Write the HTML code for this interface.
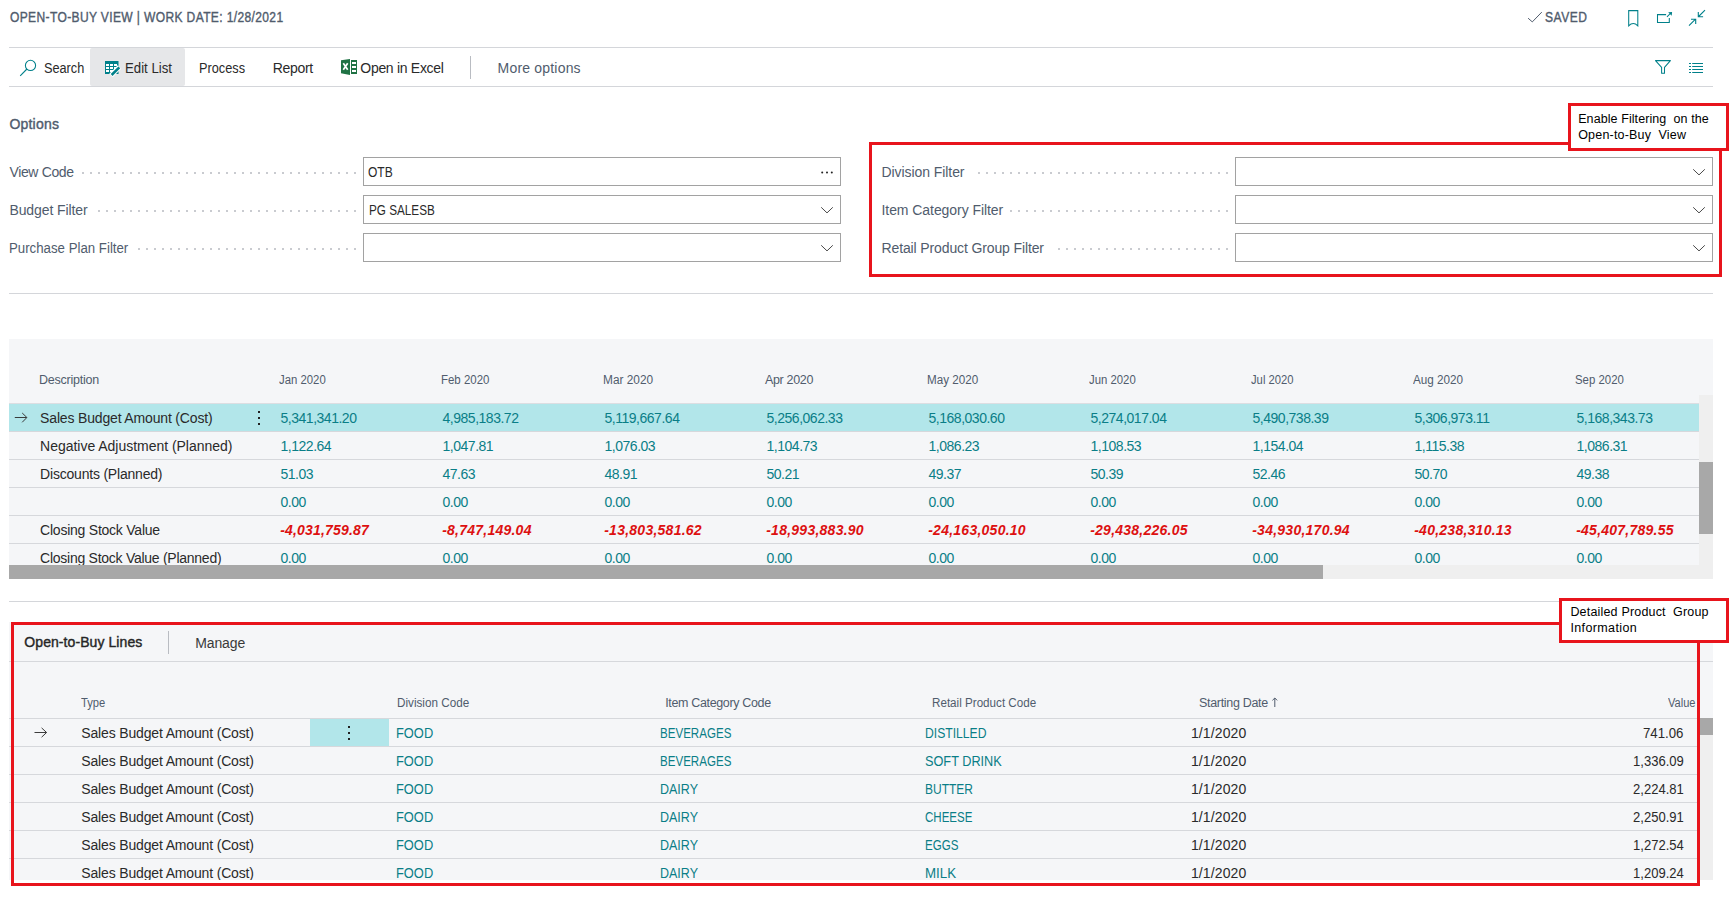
<!DOCTYPE html>
<html><head><meta charset="utf-8">
<style>
*{margin:0;padding:0;box-sizing:border-box}
html,body{width:1735px;height:902px;overflow:hidden;background:#fff}
body{position:relative;font-family:"Liberation Sans",sans-serif;color:#212121}
.t{position:absolute;white-space:pre;line-height:1}
.a{position:absolute}
.hl{position:absolute;height:1px;background:#d4d6da}
.lab{color:#505c6d}
.fld{position:absolute;border:1px solid #a2a2a2;background:#fff;height:29px}
.dots{position:absolute;height:2px;background-image:linear-gradient(to right,transparent 6px,#c9cbd0 6px);background-size:8px 2px;background-position:right top}
.hd{color:#505c6d}
.tl{color:#0a7e87}
.dk{color:#2a2a2a}
.rd{color:#dd1010;font-weight:bold;font-style:italic}
.red{position:absolute;border:3px solid #e8141c}
.call{position:absolute;background:#fff;border:3px solid #e8141c}
.ct{color:#000}
</style></head><body>
<div class="t " style="left:9.50px;top:10.05px;font-size:14px;color:#505c6d;-webkit-text-stroke:0.38px #505c6d;transform:scaleX(.86);transform-origin:left top;letter-spacing:0.42px;">OPEN-TO-BUY VIEW | WORK DATE: 1/28/2021</div>
<svg class="a" style="left:1527px;top:11px" width="16" height="13" viewBox="0 0 16 13"><path d="M1.1 7.2 L5.3 10.9 L14.8 1.1" fill="none" stroke="#505c6d" stroke-width="1.0"/></svg>
<div class="t " style="left:1545.00px;top:10.35px;font-size:14px;color:#505c6d;-webkit-text-stroke:0.38px #505c6d;transform:scaleX(.86);transform-origin:left top;letter-spacing:0.6px;">SAVED</div>
<svg class="a" style="left:1627px;top:9px" width="12" height="18" viewBox="0 0 12 18"><path d="M1.7 16.8 V1.6 H10.8 V16.8 Q6.25 12.3 1.7 16.8 Z" fill="none" stroke="#00808a" stroke-width="1.05"/></svg>
<svg class="a" style="left:1656px;top:11px" width="17" height="13" viewBox="0 0 17 13"><path d="M10.1 3.6 H1.5 V11.4 H13.3 V7" fill="none" stroke="#00808a" stroke-width="1.05"/><path d="M11 5.8 L14.8 2" stroke="#00808a" stroke-width="1.05"/><path d="M16.1 0.9 L12.2 1.3 L15.7 4.8 Z" fill="#00808a"/></svg>
<svg class="a" style="left:1688px;top:9px" width="18" height="18" viewBox="0 0 18 18"><path d="M17 1.1 L10.6 7.5 M10.3 3 V7.7 H15.1 M1 16.7 L7.5 10.2 M3 10.3 H7.7 V15" fill="none" stroke="#00808a" stroke-width="1.1"/></svg>
<div class="hl" style="left:9px;top:47px;width:1704px"></div>
<div class="hl" style="left:9px;top:86px;width:1704px"></div>
<div class="a" style="left:90px;top:48px;width:95px;height:38px;background:#e6e7e9;border-radius:2px"></div>
<svg class="a" style="left:19px;top:59px" width="19" height="19" viewBox="0 0 19 19"><circle cx="11.5" cy="6.4" r="5.1" fill="none" stroke="#00808a" stroke-width="1.05"/><path d="M7.9 10 L1.2 16.8" stroke="#00808a" stroke-width="1.1"/></svg>
<div class="t dk" style="left:44.40px;top:61.35px;font-size:14px;transform:scaleX(0.9081);transform-origin:0.00px 0;">Search</div>
<svg class="a" style="left:104px;top:60px" width="18" height="17" viewBox="0 0 18 17"><rect x="1" y="1" width="13.5" height="13" fill="#00808a"/><rect x="2" y="4" width="3" height="2" fill="#fff"/><rect x="6" y="4" width="3" height="2" fill="#fff"/><rect x="10" y="4" width="3" height="2" fill="#fff"/><rect x="2" y="7" width="3" height="2" fill="#fff"/><rect x="6" y="7" width="3" height="2" fill="#fff"/><rect x="10" y="7" width="3" height="2" fill="#fff"/><rect x="2" y="10" width="3" height="2" fill="#fff"/><rect x="6" y="10" width="3" height="2" fill="#fff"/><rect x="10" y="10" width="3" height="2" fill="#fff"/><path d="M7 15.5 L15.5 7" stroke="#fff" stroke-width="5"/><path d="M7.6 15 L15.3 7.3" stroke="#00808a" stroke-width="2.6"/></svg>
<div class="t dk" style="left:124.50px;top:61.35px;font-size:14px;transform:scaleX(0.9423);transform-origin:0.00px 0;">Edit List</div>
<div class="t dk" style="left:198.90px;top:61.35px;font-size:14px;transform:scaleX(0.9102);transform-origin:0.00px 0;">Process</div>
<div class="t dk" style="left:272.70px;top:61.35px;font-size:14px;letter-spacing:-0.320px;">Report</div>
<svg class="a" style="left:340px;top:59px" width="18" height="17" viewBox="0 0 18 17"><path d="M1 1.3 L10 0 V16 L1 14.3 Z" fill="#1f7244"/><rect x="11" y="1" width="6" height="14" fill="#1f7244"/><rect x="12" y="3" width="4" height="2" fill="#fff"/><rect x="12" y="7" width="4" height="2" fill="#fff"/><rect x="12" y="11" width="4" height="2" fill="#fff"/><path d="M3.3 4.2 L7.7 10.8 M7.7 4.2 L3.3 10.8" stroke="#fff" stroke-width="1.7"/></svg>
<div class="t dk" style="left:360.30px;top:61.35px;font-size:14px;letter-spacing:-0.296px;">Open in Excel</div>
<div class="a" style="left:470px;top:56px;width:1px;height:23px;background:#b9bcc2"></div>
<div class="t " style="left:497.60px;top:61.35px;font-size:14px;color:#505c6d;letter-spacing:0.189px;">More options</div>
<svg class="a" style="left:1654px;top:59px" width="18" height="16" viewBox="0 0 18 16"><path d="M1.5 1.6 H16.4 L10.5 8.3 V14.3 H7.6 V8.3 Z" fill="none" stroke="#00808a" stroke-width="1.05" stroke-linejoin="round"/></svg>
<svg class="a" style="left:1688px;top:61px" width="16" height="13" viewBox="0 0 16 13"><path d="M1 2.5 H3 M1 5.5 H3 M1 8.5 H3 M1 11.5 H3 M4.2 2.5 H15 M4.2 5.5 H15 M4.2 8.5 H15 M4.2 11.5 H15" stroke="#00808a" stroke-width="1.05"/></svg>
<div class="t " style="left:9.40px;top:117.45px;font-size:14px;color:#505c6d;-webkit-text-stroke:0.4px #505c6d;letter-spacing:0.212px;">Options</div>
<div class="t lab" style="left:9.40px;top:165.45px;font-size:14px;letter-spacing:-0.348px;">View Code</div>
<div class="dots" style="left:75.5px;width:280px;top:172px"></div>
<div class="fld" style="left:363px;top:157px;width:478px"></div>
<div class="t lab" style="left:881.50px;top:165.45px;font-size:14px;letter-spacing:-0.071px;">Division Filter</div>
<div class="dots" style="left:971.5px;width:256px;top:172px"></div>
<div class="fld" style="left:1235px;top:157px;width:478px"></div>
<svg class="a" style="left:1692px;top:167px" width="14" height="9" viewBox="0 0 14 9"><path d="M1.2 2.3 L7 7.9 L12.8 2.3" fill="none" stroke="#4a4a4a" stroke-width="1.0"/></svg>
<div class="t lab" style="left:9.40px;top:203.45px;font-size:14px;letter-spacing:-0.090px;">Budget Filter</div>
<div class="dots" style="left:91.5px;width:264px;top:210px"></div>
<div class="fld" style="left:363px;top:195px;width:478px"></div>
<svg class="a" style="left:820px;top:205px" width="14" height="9" viewBox="0 0 14 9"><path d="M1.2 2.3 L7 7.9 L12.8 2.3" fill="none" stroke="#4a4a4a" stroke-width="1.0"/></svg>
<div class="t lab" style="left:881.50px;top:203.45px;font-size:14px;letter-spacing:-0.064px;">Item Category Filter</div>
<div class="dots" style="left:1003.5px;width:224px;top:210px"></div>
<div class="fld" style="left:1235px;top:195px;width:478px"></div>
<svg class="a" style="left:1692px;top:205px" width="14" height="9" viewBox="0 0 14 9"><path d="M1.2 2.3 L7 7.9 L12.8 2.3" fill="none" stroke="#4a4a4a" stroke-width="1.0"/></svg>
<div class="t lab" style="left:9.40px;top:241.45px;font-size:14px;transform:scaleX(0.9463);transform-origin:0.00px 0;">Purchase Plan Filter</div>
<div class="dots" style="left:131.5px;width:224px;top:248px"></div>
<div class="fld" style="left:363px;top:233px;width:478px"></div>
<svg class="a" style="left:820px;top:243px" width="14" height="9" viewBox="0 0 14 9"><path d="M1.2 2.3 L7 7.9 L12.8 2.3" fill="none" stroke="#4a4a4a" stroke-width="1.0"/></svg>
<div class="t lab" style="left:881.50px;top:241.45px;font-size:14px;letter-spacing:-0.125px;">Retail Product Group Filter</div>
<div class="dots" style="left:1051.5px;width:176px;top:248px"></div>
<div class="fld" style="left:1235px;top:233px;width:478px"></div>
<svg class="a" style="left:1692px;top:243px" width="14" height="9" viewBox="0 0 14 9"><path d="M1.2 2.3 L7 7.9 L12.8 2.3" fill="none" stroke="#4a4a4a" stroke-width="1.0"/></svg>
<div class="t dk" style="left:368.10px;top:165.45px;font-size:14px;transform:scaleX(0.8585);transform-origin:0.00px 0;">OTB</div>
<div class="t dk" style="left:368.50px;top:203.45px;font-size:14px;transform:scaleX(0.8370);transform-origin:0.00px 0;">PG SALESB</div>
<svg class="a" style="left:818px;top:168px" width="18" height="9" viewBox="0 0 18 9"><circle cx="4.2" cy="4.5" r="1" fill="#222"/><circle cx="9" cy="4.5" r="1" fill="#222"/><circle cx="13.8" cy="4.5" r="1" fill="#222"/></svg>
<div class="hl" style="left:9px;top:293px;width:1704px"></div>
<div class="a" style="left:9px;top:339px;width:1704px;height:240px;background:#f5f6f8"></div>
<div class="t hd" style="left:39.10px;top:373.72px;font-size:12.5px;letter-spacing:-0.250px;">Description</div>
<div class="t hd" style="left:279.00px;top:373.72px;font-size:12.5px;transform:scaleX(0.9079);transform-origin:0.00px 0;">Jan 2020</div>
<div class="t hd" style="left:441.00px;top:373.72px;font-size:12.5px;transform:scaleX(0.9164);transform-origin:0.00px 0;">Feb 2020</div>
<div class="t hd" style="left:603.00px;top:373.72px;font-size:12.5px;transform:scaleX(0.9486);transform-origin:0.00px 0;">Mar 2020</div>
<div class="t hd" style="left:765.00px;top:373.72px;font-size:12.5px;letter-spacing:-0.336px;">Apr 2020</div>
<div class="t hd" style="left:927.00px;top:373.72px;font-size:12.5px;transform:scaleX(0.9330);transform-origin:0.00px 0;">May 2020</div>
<div class="t hd" style="left:1089.00px;top:373.72px;font-size:12.5px;transform:scaleX(0.9079);transform-origin:0.00px 0;">Jun 2020</div>
<div class="t hd" style="left:1251.00px;top:373.72px;font-size:12.5px;transform:scaleX(0.8995);transform-origin:0.00px 0;">Jul 2020</div>
<div class="t hd" style="left:1413.00px;top:373.72px;font-size:12.5px;transform:scaleX(0.9364);transform-origin:0.00px 0;">Aug 2020</div>
<div class="t hd" style="left:1575.00px;top:373.72px;font-size:12.5px;transform:scaleX(0.9121);transform-origin:0.00px 0;">Sep 2020</div>
<div class="a" style="left:0;top:0;width:1735px;height:565px;overflow:hidden">
<div class="a" style="left:9px;top:404px;width:1690px;height:27px;background:#b2e6ea"></div>
<div class="t dk" style="left:40.10px;top:411.35px;font-size:14px;letter-spacing:-0.163px;">Sales Budget Amount (Cost)</div>
<div class="t tl" style="left:280.50px;top:411.35px;font-size:14px;letter-spacing:-0.48px;">5,341,341.20</div>
<div class="t tl" style="left:442.50px;top:411.35px;font-size:14px;letter-spacing:-0.48px;">4,985,183.72</div>
<div class="t tl" style="left:604.50px;top:411.35px;font-size:14px;letter-spacing:-0.48px;">5,119,667.64</div>
<div class="t tl" style="left:766.50px;top:411.35px;font-size:14px;letter-spacing:-0.48px;">5,256,062.33</div>
<div class="t tl" style="left:928.50px;top:411.35px;font-size:14px;letter-spacing:-0.48px;">5,168,030.60</div>
<div class="t tl" style="left:1090.50px;top:411.35px;font-size:14px;letter-spacing:-0.48px;">5,274,017.04</div>
<div class="t tl" style="left:1252.50px;top:411.35px;font-size:14px;letter-spacing:-0.48px;">5,490,738.39</div>
<div class="t tl" style="left:1414.50px;top:411.35px;font-size:14px;letter-spacing:-0.48px;">5,306,973.11</div>
<div class="t tl" style="left:1576.50px;top:411.35px;font-size:14px;letter-spacing:-0.48px;">5,168,343.73</div>
<div class="hl" style="left:9px;top:431px;width:1690px;background:#d6d8dc"></div>
<div class="t dk" style="left:40.10px;top:439.35px;font-size:14px;letter-spacing:-0.025px;">Negative Adjustment (Planned)</div>
<div class="t tl" style="left:280.50px;top:439.35px;font-size:14px;letter-spacing:-0.48px;">1,122.64</div>
<div class="t tl" style="left:442.50px;top:439.35px;font-size:14px;letter-spacing:-0.48px;">1,047.81</div>
<div class="t tl" style="left:604.50px;top:439.35px;font-size:14px;letter-spacing:-0.48px;">1,076.03</div>
<div class="t tl" style="left:766.50px;top:439.35px;font-size:14px;letter-spacing:-0.48px;">1,104.73</div>
<div class="t tl" style="left:928.50px;top:439.35px;font-size:14px;letter-spacing:-0.48px;">1,086.23</div>
<div class="t tl" style="left:1090.50px;top:439.35px;font-size:14px;letter-spacing:-0.48px;">1,108.53</div>
<div class="t tl" style="left:1252.50px;top:439.35px;font-size:14px;letter-spacing:-0.48px;">1,154.04</div>
<div class="t tl" style="left:1414.50px;top:439.35px;font-size:14px;letter-spacing:-0.48px;">1,115.38</div>
<div class="t tl" style="left:1576.50px;top:439.35px;font-size:14px;letter-spacing:-0.48px;">1,086.31</div>
<div class="hl" style="left:9px;top:459px;width:1690px;background:#d6d8dc"></div>
<div class="t dk" style="left:40.10px;top:467.35px;font-size:14px;letter-spacing:-0.204px;">Discounts (Planned)</div>
<div class="t tl" style="left:280.50px;top:467.35px;font-size:14px;letter-spacing:-0.48px;">51.03</div>
<div class="t tl" style="left:442.50px;top:467.35px;font-size:14px;letter-spacing:-0.48px;">47.63</div>
<div class="t tl" style="left:604.50px;top:467.35px;font-size:14px;letter-spacing:-0.48px;">48.91</div>
<div class="t tl" style="left:766.50px;top:467.35px;font-size:14px;letter-spacing:-0.48px;">50.21</div>
<div class="t tl" style="left:928.50px;top:467.35px;font-size:14px;letter-spacing:-0.48px;">49.37</div>
<div class="t tl" style="left:1090.50px;top:467.35px;font-size:14px;letter-spacing:-0.48px;">50.39</div>
<div class="t tl" style="left:1252.50px;top:467.35px;font-size:14px;letter-spacing:-0.48px;">52.46</div>
<div class="t tl" style="left:1414.50px;top:467.35px;font-size:14px;letter-spacing:-0.48px;">50.70</div>
<div class="t tl" style="left:1576.50px;top:467.35px;font-size:14px;letter-spacing:-0.48px;">49.38</div>
<div class="hl" style="left:9px;top:487px;width:1690px;background:#d6d8dc"></div>
<div class="t tl" style="left:280.50px;top:495.35px;font-size:14px;letter-spacing:-0.48px;">0.00</div>
<div class="t tl" style="left:442.50px;top:495.35px;font-size:14px;letter-spacing:-0.48px;">0.00</div>
<div class="t tl" style="left:604.50px;top:495.35px;font-size:14px;letter-spacing:-0.48px;">0.00</div>
<div class="t tl" style="left:766.50px;top:495.35px;font-size:14px;letter-spacing:-0.48px;">0.00</div>
<div class="t tl" style="left:928.50px;top:495.35px;font-size:14px;letter-spacing:-0.48px;">0.00</div>
<div class="t tl" style="left:1090.50px;top:495.35px;font-size:14px;letter-spacing:-0.48px;">0.00</div>
<div class="t tl" style="left:1252.50px;top:495.35px;font-size:14px;letter-spacing:-0.48px;">0.00</div>
<div class="t tl" style="left:1414.50px;top:495.35px;font-size:14px;letter-spacing:-0.48px;">0.00</div>
<div class="t tl" style="left:1576.50px;top:495.35px;font-size:14px;letter-spacing:-0.48px;">0.00</div>
<div class="hl" style="left:9px;top:515px;width:1690px;background:#d6d8dc"></div>
<div class="t dk" style="left:40.10px;top:523.35px;font-size:14px;letter-spacing:-0.236px;">Closing Stock Value</div>
<div class="t rd" style="left:280.20px;top:523.35px;font-size:14px;letter-spacing:0.182px;">-4,031,759.87</div>
<div class="t rd" style="left:442.20px;top:523.35px;font-size:14px;letter-spacing:0.235px;">-8,747,149.04</div>
<div class="t rd" style="left:604.20px;top:523.35px;font-size:14px;letter-spacing:0.252px;">-13,803,581.62</div>
<div class="t rd" style="left:766.20px;top:523.35px;font-size:14px;letter-spacing:0.252px;">-18,993,883.90</div>
<div class="t rd" style="left:928.20px;top:523.35px;font-size:14px;letter-spacing:0.252px;">-24,163,050.10</div>
<div class="t rd" style="left:1090.20px;top:523.35px;font-size:14px;letter-spacing:0.242px;">-29,438,226.05</div>
<div class="t rd" style="left:1252.20px;top:523.35px;font-size:14px;letter-spacing:0.252px;">-34,930,170.94</div>
<div class="t rd" style="left:1414.20px;top:523.35px;font-size:14px;letter-spacing:0.252px;">-40,238,310.13</div>
<div class="t rd" style="left:1576.20px;top:523.35px;font-size:14px;letter-spacing:0.242px;">-45,407,789.55</div>
<div class="hl" style="left:9px;top:543px;width:1690px;background:#d6d8dc"></div>
<div class="t dk" style="left:40.10px;top:551.35px;font-size:14px;letter-spacing:-0.263px;">Closing Stock Value (Planned)</div>
<div class="t tl" style="left:280.50px;top:551.35px;font-size:14px;letter-spacing:-0.48px;">0.00</div>
<div class="t tl" style="left:442.50px;top:551.35px;font-size:14px;letter-spacing:-0.48px;">0.00</div>
<div class="t tl" style="left:604.50px;top:551.35px;font-size:14px;letter-spacing:-0.48px;">0.00</div>
<div class="t tl" style="left:766.50px;top:551.35px;font-size:14px;letter-spacing:-0.48px;">0.00</div>
<div class="t tl" style="left:928.50px;top:551.35px;font-size:14px;letter-spacing:-0.48px;">0.00</div>
<div class="t tl" style="left:1090.50px;top:551.35px;font-size:14px;letter-spacing:-0.48px;">0.00</div>
<div class="t tl" style="left:1252.50px;top:551.35px;font-size:14px;letter-spacing:-0.48px;">0.00</div>
<div class="t tl" style="left:1414.50px;top:551.35px;font-size:14px;letter-spacing:-0.48px;">0.00</div>
<div class="t tl" style="left:1576.50px;top:551.35px;font-size:14px;letter-spacing:-0.48px;">0.00</div>
</div>
<div class="hl" style="left:9px;top:403px;width:1690px;background:#dcdee2"></div>
<svg class="a" style="left:14px;top:412px" width="14" height="12" viewBox="0 0 14 12"><path d="M0.8 5.5 H12.6 M8.2 1 L12.9 5.5 L8.2 10.3" fill="none" stroke="#333" stroke-width="0.95"/></svg>
<div class="a" style="left:258px;top:411px;width:2px;height:2px;background:#222"></div><div class="a" style="left:258px;top:417px;width:2px;height:2px;background:#222"></div><div class="a" style="left:258px;top:423px;width:2px;height:2px;background:#222"></div>
<div class="a" style="left:1699px;top:395px;width:14px;height:170px;background:#efefef"></div>
<div class="a" style="left:1699px;top:462px;width:14px;height:72px;background:#a8a8a8"></div>
<div class="a" style="left:9px;top:565px;width:1704px;height:14px;background:#efefef"></div>
<div class="a" style="left:9px;top:565px;width:1314px;height:14px;background:#a8a8a8"></div>
<div class="hl" style="left:9px;top:601px;width:1704px"></div>
<div class="a" style="left:9px;top:622px;width:1704px;height:258px;background:#f5f6f8"></div>
<div class="t " style="left:24.30px;top:635.15px;font-size:14px;color:#262626;-webkit-text-stroke:0.4px #262626;letter-spacing:0.077px;">Open-to-Buy Lines</div>
<div class="a" style="left:168px;top:631px;width:1px;height:23px;background:#b9bcc2"></div>
<div class="t " style="left:195.20px;top:636.15px;font-size:14px;color:#3a3a3a;letter-spacing:-0.122px;">Manage</div>
<div class="hl" style="left:9px;top:661px;width:1704px;background:#d6d8dc"></div>
<div class="t hd" style="left:81.30px;top:696.62px;font-size:12.5px;transform:scaleX(0.8959);transform-origin:0.00px 0;">Type</div>
<div class="t hd" style="left:397.30px;top:696.62px;font-size:12.5px;transform:scaleX(0.9361);transform-origin:0.00px 0;">Division Code</div>
<div class="t hd" style="left:665.20px;top:696.62px;font-size:12.5px;letter-spacing:-0.346px;">Item Category Code</div>
<div class="t hd" style="left:932.30px;top:696.62px;font-size:12.5px;transform:scaleX(0.9314);transform-origin:0.00px 0;">Retail Product Code</div>
<div class="t hd" style="left:1199.00px;top:696.62px;font-size:12.5px;letter-spacing:-0.311px;">Starting Date</div>
<svg class="a" style="left:1272px;top:697px" width="7" height="11" viewBox="0 0 7 11"><path d="M2.8 10 V1 M0.4 3.4 L2.8 1 L5.2 3.4" fill="none" stroke="#505c6d" stroke-width="1"/></svg>
<div class="t hd" style="left:1667.90px;top:696.62px;font-size:12.5px;transform:scaleX(0.8853);transform-origin:0.00px 0;">Value</div>
<div class="a" style="left:0;top:0;width:1735px;height:880px;overflow:hidden">
<div class="a" style="left:310px;top:719px;width:79px;height:27px;background:#b2e6ea"></div>
<div class="hl" style="left:9px;top:718px;width:1690px;background:#d6d8dc"></div>
<div class="t dk" style="left:81.30px;top:725.95px;font-size:14px;letter-spacing:-0.159px;">Sales Budget Amount (Cost)</div>
<div class="t tl" style="left:395.50px;top:725.95px;font-size:14px;transform:scaleX(0.9194);transform-origin:0.00px 0;">FOOD</div>
<div class="t tl" style="left:660.40px;top:725.95px;font-size:14px;transform:scaleX(0.8266);transform-origin:0.00px 0;">BEVERAGES</div>
<div class="t tl" style="left:925.20px;top:725.95px;font-size:14px;transform:scaleX(0.8690);transform-origin:0.00px 0;">DISTILLED</div>
<div class="t dk" style="left:1190.90px;top:725.95px;font-size:14px;letter-spacing:0.124px;">1/1/2020</div>
<div class="t dk" style="left:1643.30px;top:725.95px;font-size:14px;transform:scaleX(0.9454);transform-origin:0.00px 0;">741.06</div>
<div class="hl" style="left:9px;top:746px;width:1690px;background:#d6d8dc"></div>
<div class="t dk" style="left:81.30px;top:753.95px;font-size:14px;letter-spacing:-0.159px;">Sales Budget Amount (Cost)</div>
<div class="t tl" style="left:395.50px;top:753.95px;font-size:14px;transform:scaleX(0.9194);transform-origin:0.00px 0;">FOOD</div>
<div class="t tl" style="left:660.40px;top:753.95px;font-size:14px;transform:scaleX(0.8266);transform-origin:0.00px 0;">BEVERAGES</div>
<div class="t tl" style="left:925.20px;top:753.95px;font-size:14px;transform:scaleX(0.9082);transform-origin:0.00px 0;">SOFT DRINK</div>
<div class="t dk" style="left:1190.90px;top:753.95px;font-size:14px;letter-spacing:0.124px;">1/1/2020</div>
<div class="t dk" style="left:1633.00px;top:753.95px;font-size:14px;transform:scaleX(0.9316);transform-origin:0.00px 0;">1,336.09</div>
<div class="hl" style="left:9px;top:774px;width:1690px;background:#d6d8dc"></div>
<div class="t dk" style="left:81.30px;top:781.95px;font-size:14px;letter-spacing:-0.159px;">Sales Budget Amount (Cost)</div>
<div class="t tl" style="left:395.50px;top:781.95px;font-size:14px;transform:scaleX(0.9194);transform-origin:0.00px 0;">FOOD</div>
<div class="t tl" style="left:660.40px;top:781.95px;font-size:14px;transform:scaleX(0.8929);transform-origin:0.00px 0;">DAIRY</div>
<div class="t tl" style="left:925.20px;top:781.95px;font-size:14px;transform:scaleX(0.8571);transform-origin:0.00px 0;">BUTTER</div>
<div class="t dk" style="left:1190.90px;top:781.95px;font-size:14px;letter-spacing:0.124px;">1/1/2020</div>
<div class="t dk" style="left:1633.00px;top:781.95px;font-size:14px;transform:scaleX(0.9316);transform-origin:0.00px 0;">2,224.81</div>
<div class="hl" style="left:9px;top:802px;width:1690px;background:#d6d8dc"></div>
<div class="t dk" style="left:81.30px;top:809.95px;font-size:14px;letter-spacing:-0.159px;">Sales Budget Amount (Cost)</div>
<div class="t tl" style="left:395.50px;top:809.95px;font-size:14px;transform:scaleX(0.9194);transform-origin:0.00px 0;">FOOD</div>
<div class="t tl" style="left:660.40px;top:809.95px;font-size:14px;transform:scaleX(0.8929);transform-origin:0.00px 0;">DAIRY</div>
<div class="t tl" style="left:925.20px;top:809.95px;font-size:14px;transform:scaleX(0.8228);transform-origin:0.00px 0;">CHEESE</div>
<div class="t dk" style="left:1190.90px;top:809.95px;font-size:14px;letter-spacing:0.124px;">1/1/2020</div>
<div class="t dk" style="left:1633.00px;top:809.95px;font-size:14px;transform:scaleX(0.9316);transform-origin:0.00px 0;">2,250.91</div>
<div class="hl" style="left:9px;top:830px;width:1690px;background:#d6d8dc"></div>
<div class="t dk" style="left:81.30px;top:837.95px;font-size:14px;letter-spacing:-0.159px;">Sales Budget Amount (Cost)</div>
<div class="t tl" style="left:395.50px;top:837.95px;font-size:14px;transform:scaleX(0.9194);transform-origin:0.00px 0;">FOOD</div>
<div class="t tl" style="left:660.40px;top:837.95px;font-size:14px;transform:scaleX(0.8929);transform-origin:0.00px 0;">DAIRY</div>
<div class="t tl" style="left:925.20px;top:837.95px;font-size:14px;transform:scaleX(0.8280);transform-origin:0.00px 0;">EGGS</div>
<div class="t dk" style="left:1190.90px;top:837.95px;font-size:14px;letter-spacing:0.124px;">1/1/2020</div>
<div class="t dk" style="left:1633.00px;top:837.95px;font-size:14px;transform:scaleX(0.9316);transform-origin:0.00px 0;">1,272.54</div>
<div class="hl" style="left:9px;top:858px;width:1690px;background:#d6d8dc"></div>
<div class="t dk" style="left:81.30px;top:865.95px;font-size:14px;letter-spacing:-0.159px;">Sales Budget Amount (Cost)</div>
<div class="t tl" style="left:395.50px;top:865.95px;font-size:14px;transform:scaleX(0.9194);transform-origin:0.00px 0;">FOOD</div>
<div class="t tl" style="left:660.40px;top:865.95px;font-size:14px;transform:scaleX(0.8929);transform-origin:0.00px 0;">DAIRY</div>
<div class="t tl" style="left:925.20px;top:865.95px;font-size:14px;transform:scaleX(0.9514);transform-origin:0.00px 0;">MILK</div>
<div class="t dk" style="left:1190.90px;top:865.95px;font-size:14px;letter-spacing:0.124px;">1/1/2020</div>
<div class="t dk" style="left:1633.00px;top:865.95px;font-size:14px;transform:scaleX(0.9316);transform-origin:0.00px 0;">1,209.24</div>
</div>
<svg class="a" style="left:34px;top:727px" width="14" height="12" viewBox="0 0 14 12"><path d="M0.5 5.5 H12.4 M7.6 0.9 L12.6 5.5 L7.6 10.2" fill="none" stroke="#333" stroke-width="0.95"/></svg>
<div class="a" style="left:348px;top:726px;width:2px;height:2px;background:#222"></div><div class="a" style="left:348px;top:732px;width:2px;height:2px;background:#222"></div><div class="a" style="left:348px;top:738px;width:2px;height:2px;background:#222"></div>
<div class="a" style="left:1700px;top:718px;width:13px;height:162px;background:#efefef"></div>
<div class="a" style="left:1700px;top:718px;width:13px;height:17px;background:#a8a8a8"></div>
<div class="red" style="left:869px;top:142px;width:853px;height:135px"></div>
<div class="call" style="left:1568px;top:103px;width:161px;height:48px"></div>
<div class="t ct" style="left:1578.20px;top:113.32px;font-size:12.5px;letter-spacing:0.084px;">Enable Filtering  on the</div>
<div class="t ct" style="left:1578.20px;top:129.02px;font-size:12.5px;letter-spacing:0.191px;">Open-to-Buy  View</div>
<div class="red" style="left:11px;top:622px;width:1689px;height:264px"></div>
<div class="call" style="left:1559px;top:598px;width:170px;height:45px"></div>
<div class="t ct" style="left:1570.40px;top:605.62px;font-size:12.5px;letter-spacing:0.185px;">Detailed Product  Group</div>
<div class="t ct" style="left:1570.40px;top:621.62px;font-size:12.5px;letter-spacing:0.384px;">Information</div>
</body></html>
